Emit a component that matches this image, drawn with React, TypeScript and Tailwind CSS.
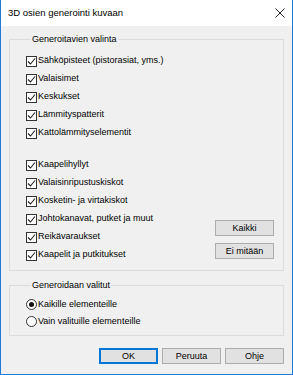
import React from 'react';

const font = { fontFamily: '"Liberation Sans", Arial, sans-serif' };

function Check({ label }: { label: string }) {
    return (
        <div className="flex items-center h-[18px]">
            <span className="w-[11px] h-[11px] border border-[#333] bg-white flex items-center justify-center">
                <svg width="9" height="9" viewBox="0 0 9 9">
                    <polyline points="1,4.5 3.5,7 8,1.5" fill="none" stroke="#222" strokeWidth="1.1" />
                </svg>
            </span>
            <span className="ml-[1px] text-[9px] text-black whitespace-nowrap">{label}</span>
        </div>
    );
}

function Radio({ label, checked }: { label: string; checked?: boolean }) {
    return (
        <div className="flex items-center h-[17px]">
            <span className="w-[11px] h-[11px] rounded-full border border-[#333] bg-white flex items-center justify-center">
                {checked && <span className="w-[5px] h-[5px] rounded-full bg-[#111]" />}
            </span>
            <span className="ml-[1px] text-[9px] text-black whitespace-nowrap">{label}</span>
        </div>
    );
}

function Btn({ text, primary }: { text: string; primary?: boolean }) {
    return (
        <button
            className={`w-[59px] h-[16px] bg-[#e1e1e1] text-[9px] text-black leading-none flex items-center justify-center ${
                primary ? 'border-2 border-[#0078d7]' : 'border border-[#adadad]'
            }`}
        >
            {text}
        </button>
    );
}

const setOne = [
    'Sähköpisteet (pistorasiat, yms.)',
    'Valaisimet',
    'Keskukset',
    'Lämmityspatterit',
    'Kattolämmityselementit',
];

const setTwo = [
    'Kaapelihyllyt',
    'Valaisinripustuskiskot',
    'Kosketin- ja virtakiskot',
    'Johtokanavat, putket ja muut',
    'Reikävaraukset',
    'Kaapelit ja putkitukset',
];

export default function App() {
    return (
        <div style={font} className="w-[293px] h-[375px] flex flex-col bg-[#f0f0f0] border-x border-b border-[#1f7bd6]">
            <div className="h-[26px] bg-white flex items-center justify-between pl-[7px] pr-[7px]">
                <span className="text-[9.5px] text-black">3D osien generointi kuvaan</span>
                <svg width="10" height="10" viewBox="0 0 10 10">
                    <path d="M0.5 0.5 L9.5 9.5 M9.5 0.5 L0.5 9.5" stroke="#222" strokeWidth="1" />
                </svg>
            </div>

            <div className="flex flex-col px-[8px] pt-[8px]">
                <fieldset className="border border-[#dcdcdc] pl-[16px] pr-[9px] pt-[7px] pb-[6px] flex">
                    <legend className="ml-[5px] px-[1px] text-[9px] leading-[11px] text-black">Generoitavien valinta</legend>
                    <div className="flex flex-1">
                        <div className="flex flex-col flex-1">
                            {setOne.map((t) => (
                                <Check key={t} label={t} />
                            ))}
                            <div className="h-[14px]" />
                            {setTwo.map((t) => (
                                <Check key={t} label={t} />
                            ))}
                        </div>
                        <div className="flex flex-col justify-end gap-[7px] mb-[5px]">
                            <Btn text="Kaikki" />
                            <Btn text="Ei mitään" />
                        </div>
                    </div>
                </fieldset>

                <fieldset className="mt-[9px] border border-[#dcdcdc] pl-[16px] pt-[5px] pb-[5px]">
                    <legend className="ml-[5px] px-[1px] text-[9px] leading-[11px] text-black">Generoidaan valitut</legend>
                    <Radio label="Kaikille elementeille" checked />
                    <Radio label="Vain valituille elementeille" />
                </fieldset>

                <div className="flex justify-end gap-[4px] mt-[12px]">
                    <Btn text="OK" primary />
                    <Btn text="Peruuta" />
                    <Btn text="Ohje" />
                </div>
            </div>
        </div>
    );
}
